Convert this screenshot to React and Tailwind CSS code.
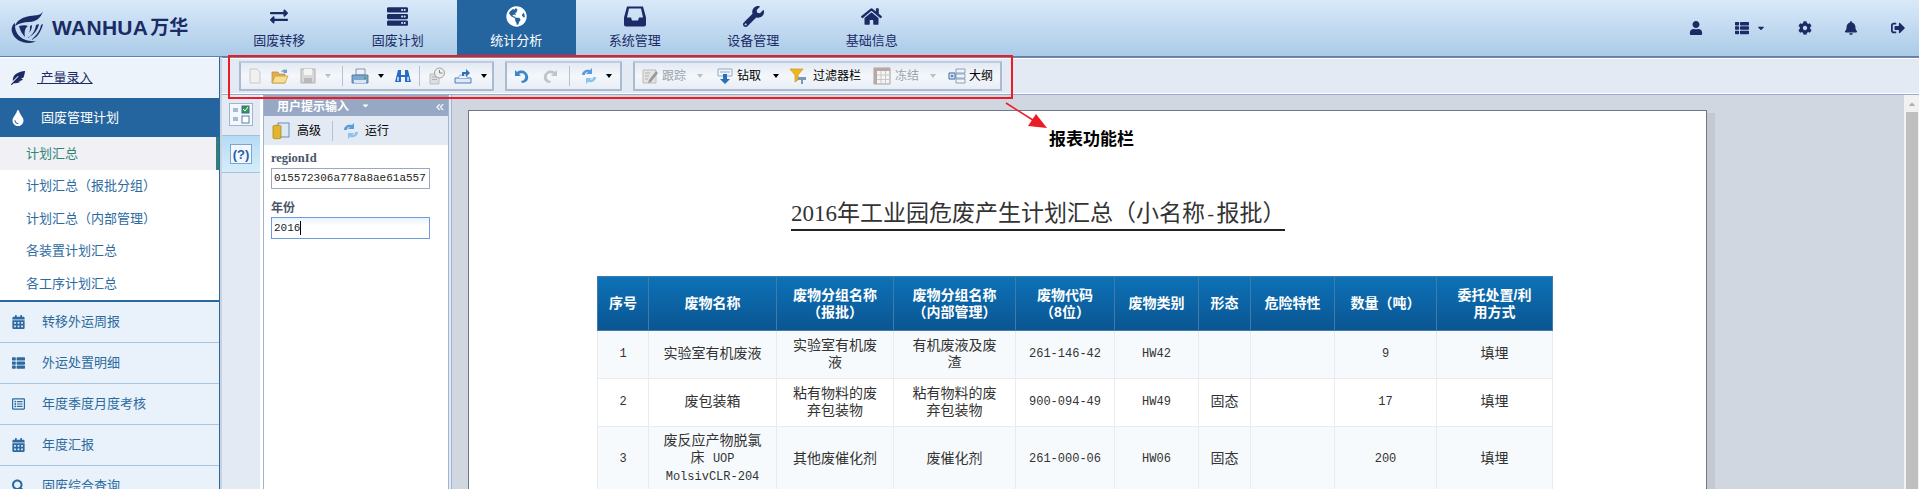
import React from 'react';
import {
  FaExchangeAlt, FaServer, FaGlobeAmericas, FaWrench, FaHome, FaUser, FaThList,
  FaCog, FaBell, FaSignOutAlt, FaCaretDown, FaFeatherAlt, FaTint, FaCalendarAlt,
  FaRegListAlt, FaSearch, FaCaretUp,
} from 'react-icons/fa';

const cjk = "font-['Liberation_Sans','Noto_Sans_CJK_SC',sans-serif]";
const mono = "font-['Liberation_Mono','Noto_Sans_CJK_SC',monospace]";

const TrayIcon = ({ className = '' }) => (
  <svg viewBox="0 0 22 20" className={className}>
    <path
      fillRule="evenodd"
      fill="currentColor"
      d="M3 0h16l3 11v7a2 2 0 0 1-2 2H2a2 2 0 0 1-2-2v-7zM5 2l-2 9h4l1 3h6l1-3h4l-2-9z"
    />
  </svg>
);

const tabs = [
  { label: '固废转移', Icon: FaExchangeAlt, size: 'w-[18px] h-[21px]' },
  { label: '固废计划', Icon: FaServer, size: 'w-[21px] h-[21px]' },
  { label: '统计分析', Icon: FaGlobeAmericas, size: 'w-[21px] h-[21px]', active: true },
  { label: '系统管理', Icon: TrayIcon, size: 'w-[22px] h-[21px]' },
  { label: '设备管理', Icon: FaWrench, size: 'w-[21px] h-[21px]' },
  { label: '基础信息', Icon: FaHome, size: 'w-[21px] h-[21px]' },
];

const subItems = ['计划汇总', '计划汇总（报批分组）', '计划汇总（内部管理）', '各装置计划汇总', '各工序计划汇总'];

const sideRows = [
  { label: '转移外运周报', Icon: FaCalendarAlt },
  { label: '外运处置明细', Icon: FaThList },
  { label: '年度季度月度考核', Icon: FaRegListAlt },
  { label: '年度汇报', Icon: FaCalendarAlt },
  { label: '固废综合查询', Icon: FaSearch },
];

const Logo = () => (
  <svg width="33" height="33" viewBox="0 0 33 33" className="shrink-0">
    <path d="M32 0c-2 5-7 4-13 5C12 6 6 9 4 15c5-3 9-4 14-4 7 0 12-4 14-11z" fill="#1b2b66" />
    <path d="M4 12C1 14 0 18 1 21c2 7 9 11 17 11 3 0 5-1 7-2-8 1-17-2-20-10-1-3-1-5-1-8z" fill="#1b2b66" />
    <path d="M8 15c4-1 7-1 9 0-3 2-4 6-3 11-3-3-5-7-6-11z" fill="#1b2b66" />
    <path d="M16 27c5-2 8-7 9-13l3-1c-1 6-6 12-12 14z" fill="#1b2b66" />
    <path d="M20 29c6-2 10-8 12-16l-2 1c-1 6-5 11-10 15z" fill="#1b2b66" />
    <path d="M18 22c2-2 3-5 3-8l-2 1c0 3 0 5-1 7z" fill="#1b2b66" />
  </svg>
);

// toolbar drawings
const Ico = ({ className = '', children, vb = '0 0 18 18' }) => (
  <svg width="18" height="18" viewBox={vb} className={`shrink-0 ${className}`}>{children}</svg>
);
const IcoNew = (p) => <Ico {...p}><path d="M4 2h7l3 3v11H4z" fill="#f0f0f0" stroke="#c8c8c8" /></Ico>;
const IcoOpen = (p) => (
  <Ico {...p}>
    <path d="M1 5h6l1 2h6v9H1z" fill="#e0b050" stroke="#b88a30" strokeWidth=".7" />
    <path d="M1 16l3-7h13l-3 7z" fill="#f8dc90" stroke="#c09a40" strokeWidth=".7" />
    <path d="M10 5c1-2 3-3 5-2l1-1v4h-4l1-1c-1-.5-2 0-3 0z" fill="#6f9fd0" />
  </Ico>
);
const IcoSave = (p) => (
  <Ico {...p}>
    <path d="M2 2h14v14H2z" fill="#d8d8d8" stroke="#b0b0b0" />
    <path d="M5 2h8v6H5z" fill="#f4f4f4" />
    <path d="M5 11h8v5H5z" fill="#b8b8b8" />
  </Ico>
);
const IcoPrint = (p) => (
  <Ico {...p}>
    <path d="M5 2h9v6H5z" fill="#eef2f8" stroke="#6b7f98" strokeWidth=".8" />
    <path d="M1 8h16v8H1z" fill="#7ea6d2" stroke="#4a6f9c" strokeWidth=".8" />
    <path d="M3 13h12v3H3z" fill="#d8e4f0" />
    <circle cx="14" cy="11" r="1.2" fill="#3cae4a" />
  </Ico>
);
const IcoBino = (p) => (
  <Ico {...p}>
    <path d="M4 3h3v5h4V3h3l3 12h-6V10H7v5H1z" fill="#2a6cc0" />
    <path d="M3 10h2v4H3zM13 10h2v4h-2z" fill="#a8cdf0" />
  </Ico>
);
const IcoClock = (p) => (
  <Ico {...p}>
    <path d="M2 7h9v10H2z" fill="#dedede" stroke="#b4b4b4" strokeWidth=".8" />
    <path d="M4 10h5M4 12.5h5" stroke="#b0b0b0" />
    <circle cx="11.5" cy="6" r="5" fill="#eeeeee" stroke="#a0a0a0" />
    <path d="M11.5 3v3h3" stroke="#888" fill="none" />
  </Ico>
);
const IcoExport = (p) => (
  <Ico {...p}>
    <path d="M1 11h16v5H1z" fill="#dfe8f4" stroke="#4f7fb8" />
    <path d="M4 11l2-3h6l2 3" fill="#eef3fa" stroke="#6b8fbc" strokeWidth=".7" />
    <path d="M8 9V5h4V2l4 4-4 4V7h-2v2z" fill="#2d72b8" />
  </Ico>
);
const IcoUndo = ({ color = '#3f86c8', flip, className = '' }) => (
  <Ico className={`${flip ? '-scale-x-100' : ''} ${className}`}>
    <path d="M3 3v6h6L7 7c3-2 7 0 6 4-.5 2-2 3-4 3l1 2c4 0 7-3 6-7-1-5-7-7-11-4z" fill={color} />
  </Ico>
);
const IcoRefresh = (p) => (
  <Ico {...p}>
    <path d="M2 8c0-4 4-6 8-5l2-2v6H6l2-2c-2 0-3 1-3 3z" fill="#5b9ddb" />
    <path d="M16 10c0 4-4 6-8 5l-2 2v-6h6l-2 2c2 0 3-1 3-3z" fill="#8cc4ec" />
  </Ico>
);
const IcoTrack = (p) => (
  <Ico {...p}>
    <path d="M2 3h13v13H2z" fill="#e4e4e4" stroke="#bcbcbc" />
    <path d="M4 6h5M4 9h4M4 12h3" stroke="#b0b0b0" />
    <path d="M8 13l7-9 2 2-7 9-3 1z" fill="#9a9a9a" />
  </Ico>
);
const IcoDrill = (p) => (
  <Ico {...p}>
    <path d="M2 2h14v7H2z" fill="#f2f6fb" stroke="#8faac8" />
    <path d="M4 5h10" stroke="#8faac8" />
    <path d="M7 7h4v5h3l-5 5-5-5h3z" fill="#2b6fb8" />
  </Ico>
);
const IcoFilter = (p) => (
  <Ico {...p}>
    <path d="M1 2h13L9 8v5L6 15V8z" fill="#f2b71a" stroke="#c08a10" strokeWidth=".6" />
    <path d="M9 10h8v3h-3v4h-2v-4H9z" fill="#7c98b8" />
  </Ico>
);
const IcoGrid = (p) => (
  <Ico {...p}>
    <path d="M1 1h16v16H1z" fill="#f4f4f4" stroke="#a8a0a0" />
    <path d="M1 1h16v3H1zM1 1h3v16H1z" fill="#b8a8a8" />
    <path d="M8 4v13M12.5 4v13M4 8h13M4 12.500h13" stroke="#c8c8c8" />
  </Ico>
);
const IcoOutline = (p) => (
  <Ico {...p}>
    <path d="M8 2h9v4H8zM8 7h9v4H8zM8 12h9v4H8z" fill="#f0f4f9" stroke="#6f8db0" strokeWidth=".8" />
    <path d="M1 6h6v6H1z" fill="#eef3fa" stroke="#33659c" />
    <path d="M2.500 9h3M4 7.500v3" stroke="#33659c" />
  </Ico>
);

const Caret = ({ className = '', off }) => (
  <span className={`w-[8px] shrink-0 flex justify-center ${className}`}>
    <span className={`w-0 h-0 border-x-[3px] border-x-transparent border-t-[4px] ${off ? 'border-t-[#b8c0cc]' : 'border-t-black'}`} />
  </span>
);
const Sep = ({ className = '' }) => <span className={`w-px h-[20px] shrink-0 bg-[#b4c2d8] ${className}`} />;

const Toolbar = ({ className = '', children }) => (
  <div className={`h-[30px] flex items-center shrink-0 rounded-[1px] border-[2px] border-[#a9bad3] border-t-[#bdcadf] bg-gradient-to-b from-[#e4eaf3] via-[#f4f7fb] to-[#e9eef6] text-[12px] ${className}`}>
    {children}
  </div>
);

const headers = [
  <>序号</>,
  <>废物名称</>,
  <>废物分组名称<br />（报批）</>,
  <>废物分组名称<br />（内部管理）</>,
  <>废物代码<br />（8位）</>,
  <>废物类别</>,
  <>形态</>,
  <>危险特性</>,
  <>数量（吨）</>,
  <>委托处置/利<br />用方式</>,
];

const rows = [
  { no: '1', name: '实验室有机废液', g1: '实验室有机废液', g2: '有机废液及废渣', code: '261-146-42', cat: 'HW42', state: '', qty: '9' },
  { no: '2', name: '废包装箱', g1: '粘有物料的废弃包装物', g2: '粘有物料的废弃包装物', code: '900-094-49', cat: 'HW49', state: '固态', qty: '17' },
  {
    no: '3',
    name: <>废反应产物脱氯<br />床 <span className="text-[12px]">UOP</span><br /><span className="text-[12px]">MolsivCLR-204</span></>,
    g1: '其他废催化剂', g2: '废催化剂', code: '261-000-06', cat: 'HW06', state: '固态', qty: '200',
  },
];

const tdBase = 'border border-[#e8ebef] px-[14px] text-center align-middle leading-[17px]';

const App = () => {
  return (
    <div className={`relative w-full h-[489px] overflow-hidden flex flex-col bg-white ${cjk}`}>
      <header className="h-[57px] shrink-0 flex border-b border-[#5f7db5] bg-gradient-to-b from-[#d9e9f9] to-[#abcbe8] text-[#1b2b66]">
        <div className="w-[220px] shrink-0 flex items-center pl-[11px] pb-[1px]">
          <Logo />
          <span className="ml-[8px] text-[21px] font-bold font-['Liberation_Sans'] tracking-[0.3px]">WANHUA</span>
          <span className="ml-[2px] text-[19px] font-bold leading-none">万华</span>
        </div>
        {tabs.map(({ label, Icon, size, active }) => (
          <div
            key={label}
            className={`w-[118.5px] shrink-0 flex flex-col items-center pt-[6px] text-[13px] ${active ? 'bg-[#25659f] text-white' : ''}`}
          >
            <Icon className={size} />
            <span className="mt-[5px] leading-[18px]">{label}</span>
          </div>
        ))}
        <div className="ml-auto flex items-center pr-[14px] pb-[1px] text-[14px]">
          <FaUser />
          <FaThList className="ml-[32px]" />
          <FaCaretDown className="ml-[7px] w-[10px] h-[10px]" />
          <FaCog className="ml-[32px]" />
          <FaBell className="ml-[32px]" />
          <FaSignOutAlt className="ml-[33px]" />
        </div>
      </header>

      <div className="flex-1 flex min-h-0">
        <aside className="w-[220px] shrink-0 border-r border-[#2b68a3] flex flex-col overflow-hidden text-[13px]">
          <div className="h-[41px] shrink-0 flex items-center pl-[11px] bg-[#edf3fb] text-[#1b2b66] border-t border-[#ffffff]">
            <FaFeatherAlt className="w-[14px] h-[14px]" />
            <span className="ml-[12px] underline whitespace-pre"> 产量录入</span>
          </div>
          <div className="h-[39px] shrink-0 flex items-center pl-[11px] bg-[#25659f] text-white">
            <FaTint className="w-[14px] h-[16px]" />
            <span className="ml-[16px]">固废管理计划</span>
          </div>
          <ul className="shrink-0 border-b-2 border-[#2b68a3] text-[#2c6aa0]">
            {subItems.map((item, i) => (
              <li
                key={item}
                className={`h-[32.5px] flex items-center pl-[26px] ${i === 0 ? 'bg-[#f0f0f5] text-[#2f8576] border-r-[3px] border-[#2f7f78]' : ''}`}
              >
                {item}
              </li>
            ))}
          </ul>
          {sideRows.map(({ label, Icon }) => (
            <div key={label} className="h-[41px] shrink-0 flex items-center pl-[12px] bg-[#e9f2fa] border-b border-[#a8c5e0] text-[#2c6aa0]">
              <Icon className="w-[13px] h-[14px]" />
              <span className="ml-[17px]">{label}</span>
            </div>
          ))}
        </aside>

        <main className="flex-1 min-w-0 flex flex-col border-l-2 border-[#c9d2df]">
          <div className="h-[38px] shrink-0 border-t border-[#7d8699] border-b border-b-[#98aacb] bg-[#e3eaf4] flex items-center gap-[11px] pl-[17px] shadow-[inset_0_1px_0_#fff,inset_0_-1px_0_#fff]">
            <Toolbar className="w-[255px]">
              <IcoNew className="ml-[5px]" />
              <IcoOpen className="ml-[7px]" />
              <IcoSave className="ml-[10px]" />
              <Caret off className="ml-[7px]" />
              <Sep className="ml-[10px]" />
              <IcoPrint className="ml-[8px]" />
              <Caret className="ml-[8px]" />
              <IcoBino className="ml-[9px]" />
              <Sep className="ml-[7px]" />
              <IcoClock className="ml-[8px]" />
              <IcoExport className="ml-[8px]" />
              <Caret className="ml-[8px]" />
            </Toolbar>
            <Toolbar className="w-[117px]">
              <IcoUndo className="ml-[5px]" />
              <IcoUndo flip color="#bfc4c8" className="ml-[12px]" />
              <Sep className="ml-[9px]" />
              <IcoRefresh className="ml-[10px]" />
              <Caret className="ml-[7px]" />
            </Toolbar>
            <Toolbar className="w-[369px]">
              <IcoTrack className="ml-[6px]" />
              <span className="ml-[3px] text-[#9aa3ad]">跟踪</span>
              <Caret off className="ml-[10px]" />
              <IcoDrill className="ml-[12px]" />
              <span className="ml-[3px] text-black">钻取</span>
              <Caret className="ml-[11px]" />
              <IcoFilter className="ml-[9px]" />
              <span className="ml-[6px] text-black">过滤器栏</span>
              <IcoGrid className="ml-[12px]" />
              <span className="ml-[4px] text-[#9aa3ad]">冻结</span>
              <Caret off className="ml-[10px]" />
              <IcoOutline className="ml-[11px]" />
              <span className="ml-[3px] text-black">大纲</span>
            </Toolbar>
          </div>

          <div className="flex-1 flex min-h-0">
            <div className="w-[38px] shrink-0 bg-[#e3eaf4] flex flex-col items-center pt-[8px]">
              <svg width="24" height="23" viewBox="0 0 24 23">
                <rect x=".5" y=".5" width="23" height="22" fill="#f4f8fd" stroke="#9db4d2" />
                <path d="M4 6h5M4 15h5M4 8h5M4 17h5" stroke="#5b7da8" />
                <rect x="13" y="3" width="7" height="7" fill="#2f9b4a" stroke="#3a6a9a" />
                <path d="M14 6l2 2 3-4" stroke="#fff" fill="none" />
                <rect x="13" y="13" width="7" height="7" fill="#fff" stroke="#5b7da8" />
              </svg>
              <div className="mt-[9px] w-[38px] h-[38px] flex items-center justify-center border-y border-[#a5c0d8] bg-gradient-to-b from-[#b5dbf6] to-[#d6edfa]">
                <div className="w-[22px] h-[20px] bg-[#f2f8fd] border border-[#7ba4cf] flex items-center justify-center text-[13px] font-bold text-[#2b5ca8] leading-none">(?)</div>
              </div>
            </div>

            <div className="w-[185px] shrink-0 ml-[3px] border-l border-[#a0b4d0] flex flex-col bg-white">
              <div className="h-[21px] shrink-0 flex items-center pl-[13px] pr-[4px] bg-[#97a8c4] text-white text-[12px] font-bold">
                <span className="pt-[3px]">用户提示输入</span>
                <FaCaretDown className="ml-[12px] w-[9px] h-[9px]" />
                <span className="ml-auto text-[15px] leading-none font-normal">«</span>
              </div>
              <div className="h-[29px] shrink-0 flex items-center bg-[#e3eaf4] text-[12px] text-black">
                <svg width="18" height="18" viewBox="0 0 18 18" className="ml-[8px]">
                  <rect x="6" y="1" width="11" height="14" fill="#dce8f5" stroke="#6f8db0" />
                  <path d="M1 4c0-1 8-1 8 0v12c0 1-8 1-8 0z" fill="#e2b52c" stroke="#a37f12" strokeWidth=".7" />
                </svg>
                <span className="ml-[7px]">高级</span>
                <Sep className="ml-[11px]" />
                <IcoRefresh className="ml-[9px]" />
                <span className="ml-[5px]">运行</span>
              </div>
              <div className="px-[7px] pt-[6px] text-[12px]">
                <label className="block leading-[15px] font-bold text-[#4a5568] font-['Liberation_Serif'] text-[12.500px]">regionId</label>
                <div className={`mt-[2px] w-[159px] h-[21px] border border-[#9aa8c4] flex items-center pl-[2px] overflow-hidden whitespace-nowrap text-[11px] text-[#222] ${mono}`}>
                  015572306a778a8ae61a557
                </div>
                <label className="block mt-[12px] leading-[15px] font-bold text-[#4a5568]">年份</label>
                <div className={`mt-[1px] w-[159px] h-[22px] border border-[#6f9be0] bg-gradient-to-b from-[#eaf2fb] to-white to-40% flex items-center pl-[2px] text-[11px] text-[#222] ${mono}`}>
                  2016<span className="w-px h-[14px] bg-black" />
                </div>
              </div>
            </div>

            <div className="w-[4px] shrink-0 bg-[#e3eaf4] border-x border-[#a0b4d0]" />

            <div className="flex-1 min-w-0 bg-[#d0d7e0] overflow-hidden pl-[16px] pt-[15px]">
              <div className="w-[1239px] h-[400px] bg-white border border-[#6f7689] border-b-0 shadow-[8px_3px_0_#c4c9d0]">
                <div className="pl-[322px] pt-[90px]">
                  <h1 className="inline-block border-b-2 border-[#222] text-[23px] leading-[26px] font-normal text-[#333] whitespace-nowrap font-['Liberation_Serif','Noto_Sans_CJK_SC',serif]">
                    2016年工业园危废产生计划汇总（小名称<span className={`text-[19px] ${mono}`}>-</span>报批）
                  </h1>
                </div>
                <table className={`ml-[128px] mt-[45px] w-[955px] table-fixed border-collapse text-[14px] text-[#333] ${mono}`}>
                  <colgroup>
                    <col className="w-[51px]" />
                    <col className="w-[128px]" />
                    <col className="w-[117px]" />
                    <col className="w-[122px]" />
                    <col className="w-[99px]" />
                    <col className="w-[84px]" />
                    <col className="w-[52px]" />
                    <col className="w-[84px]" />
                    <col className="w-[102px]" />
                    <col className="w-[116px]" />
                  </colgroup>
                  <thead>
                    <tr className="h-[54px] bg-gradient-to-b from-[#0d72b6] to-[#0a5592]">
                      {headers.map((h, i) => (
                        <th key={i} className={`border border-[#3f7cab] px-[4px] text-center align-middle leading-[17px] font-bold text-white text-[14px] ${cjk}`}>
                          {h}
                        </th>
                      ))}
                    </tr>
                  </thead>
                  <tbody>
                    {rows.map((r, i) => (
                      <tr key={r.no} className={`${i === 2 ? 'h-[66px]' : 'h-[48px]'} ${i % 2 === 0 ? 'bg-[#f7fafc]' : 'bg-white'}`}>
                        <td className={`${tdBase} text-[12px]`}>{r.no}</td>
                        <td className={tdBase}>{r.name}</td>
                        <td className={tdBase}>{r.g1}</td>
                        <td className={tdBase}>{r.g2}</td>
                        <td className={`${tdBase} text-[12px] !px-0`}>{r.code}</td>
                        <td className={`${tdBase} text-[12px]`}>{r.cat}</td>
                        <td className={`${tdBase} !px-0`}>{r.state}</td>
                        <td className={tdBase} />
                        <td className={`${tdBase} text-[12px]`}>{r.qty}</td>
                        <td className={tdBase}>填埋</td>
                      </tr>
                    ))}
                  </tbody>
                </table>
              </div>
            </div>

            <div className="w-[15px] shrink-0 bg-[#f1f1f1] flex flex-col items-center">
              <FaCaretUp className="mt-[4px] w-[10px] h-[10px] text-[#b0b0b0]" />
              <div className="mt-[3px] w-[12px] flex-1 bg-[#bfbfbf]" />
            </div>
          </div>
        </main>
      </div>

      {/* annotation over the toolbar */}
      <div className="absolute left-[228px] top-[55px] w-[785px] h-[44px] border-2 border-[#ed1c24] pointer-events-none" />
      <svg className="absolute left-[1004px] top-[101px]" width="46" height="30" viewBox="0 0 46 30">
        <path d="M2 2l30 19" stroke="#ed1c24" strokeWidth="1.600" />
        <path d="M43 27L24 25l8-12z" fill="#ed1c24" />
      </svg>
      <div className="absolute left-[1049px] top-[128px] text-[17px] leading-[24px] font-bold text-black">报表功能栏</div>
    </div>
  );
};

export default App;
